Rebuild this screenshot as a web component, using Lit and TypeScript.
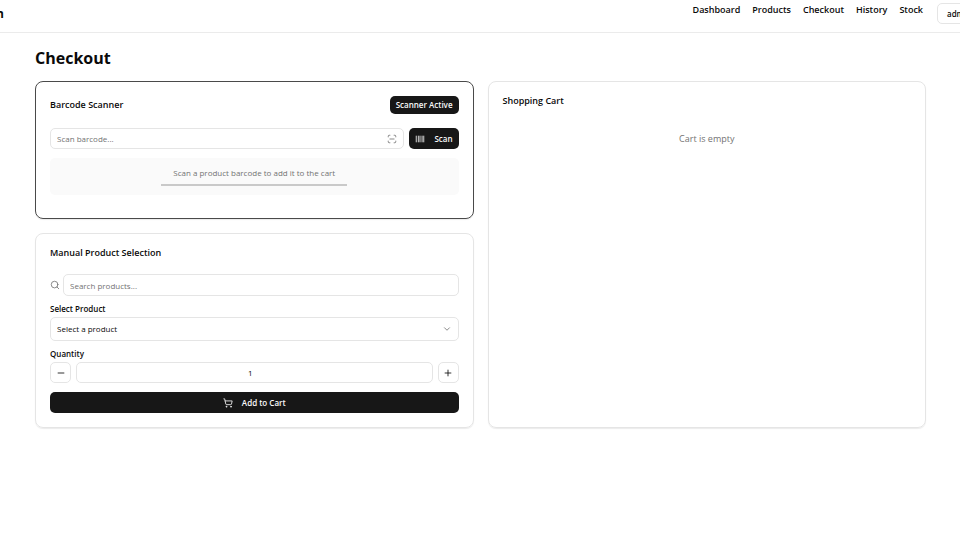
import { LitElement, html, css, svg } from "lit";
import { customElement, state } from "lit/decorators.js";

const icon = (body: unknown, cls = "icon") => html`
  <svg class=${cls} viewBox="0 0 24 24" fill="none" stroke="currentColor" stroke-width="2"
    stroke-linecap="round" stroke-linejoin="round" aria-hidden="true">${body}</svg>`;

const scanIcon = svg`<path d="M3 7V5a2 2 0 0 1 2-2h2M17 3h2a2 2 0 0 1 2 2v2M21 17v2a2 2 0 0 1-2 2h-2M7 21H5a2 2 0 0 1-2-2v-2M7 12h10"/>`;
const barcodeIcon = svg`<path d="M3 5v14M8 5v14M12 5v14M17 5v14M21 5v14"/>`;
const searchIcon = svg`<circle cx="11" cy="11" r="8"/><path d="m21 21-4.3-4.3"/>`;
const chevronIcon = svg`<path d="m6 9 6 6 6-6"/>`;
const minusIcon = svg`<path d="M5 12h14"/>`;
const plusIcon = svg`<path d="M5 12h14M12 5v14"/>`;
const cartIcon = svg`<circle cx="8" cy="21" r="1"/><circle cx="19" cy="21" r="1"/><path d="M2 2h2l2.7 12.4a2 2 0 0 0 2 1.600h9.700a2 2 0 0 0 2-1.600L22 7H5.100"/>`;

@customElement("app-root")
export class AppRoot extends LitElement {
  @state() private quantity = 1;

  static styles = css`
    :host {
      display: block;
      min-height: 100vh;
      overflow: hidden;
      background: #fff;
      color: #0a0a0a;
      font: 400 8px/12px "Open Sans", "Noto Sans", sans-serif;
    }
    * { box-sizing: border-box; }
    button, input, select { font: inherit; color: inherit; margin: 0; outline: none; }
    h1, h2, p { margin: 0; }
    header {
      display: flex;
      align-items: flex-start;
      justify-content: space-between;
      height: 33px;
      padding-top: 3px;
      border-bottom: 1px solid #ebebeb;
    }
    .brand {
      margin-left: -4px;
      padding-top: 3px;
      font-size: 12px;
      line-height: 16px;
      font-weight: 700;
      white-space: nowrap;
    }
    nav { display: flex; gap: 12px; margin-right: -18px; }
    nav a {
      color: inherit;
      text-decoration: none;
      font-size: 9px;
      line-height: 14px;
      font-weight: 600;
    }
    .user {
      width: 41px;
      height: 21px;
      margin-left: 2px;
      padding: 0 9px;
      border: 1px solid #e5e5e5;
      border-radius: 5px;
      background: #fff;
      font-weight: 600;
    }
    main { padding: 13px 34px 0 35px; }
    h1 { font-size: 16px; line-height: 24px; font-weight: 700; margin-bottom: 11px; }
    .columns { display: grid; grid-template-columns: 1fr 1fr; gap: 14px; }
    .stack { display: grid; gap: 14px; }
    .card {
      padding: 13px 14px 14px;
      border: 1px solid #e5e5e5;
      border-radius: 8px;
      box-shadow: 0 1px 1px rgba(0, 0, 0, 0.08);
    }
    .scanner { border-color: #4a4a4a; padding: 14px 14px 23px; }
    h2 { font-size: 9px; line-height: 12px; font-weight: 600; }
    .title-row {
      display: flex;
      align-items: center;
      justify-content: space-between;
      margin-bottom: 14px;
    }
    .row { display: flex; align-items: center; gap: 5px; }
    .primary {
      display: flex;
      align-items: center;
      justify-content: center;
      height: 21px;
      padding: 0 6px;
      border: 0;
      border-radius: 5px;
      background: #171717;
      color: #fafafa;
      font-weight: 600;
      gap: 9px;
      white-space: nowrap;
    }
    .status { height: 18px; }
    .full { width: 100%; margin-top: 9px; }
    .field { position: relative; flex: 1; min-width: 0; display: flex; }
    .box {
      flex: 1;
      width: 100%;
      min-width: 0;
      height: 21px;
      padding: 0 6px;
      border: 1px solid #e5e5e5;
      border-radius: 5px;
      background: #fff;
      appearance: none;
    }
    .box::placeholder { color: #737373; opacity: 1; }
    .select { height: 24px; }
    .count { padding: 0 14px 0 6px; text-align: center; appearance: textfield; }
    .count::-webkit-inner-spin-button { display: none; }
    .icon { width: 10px; height: 10px; flex: none; display: block; }
    .muted { color: #737373; }
    .trailing { position: absolute; right: 7px; top: 0; bottom: 0; display: flex; align-items: center; color: #737373; pointer-events: none; }
    .hint {
      margin-top: 9px;
      height: 37px;
      padding-top: 9px;
      border-radius: 5px;
      background: #fafafa;
      color: #737373;
      text-align: center;
    }
    .bar { width: 186px; height: 2px; margin: 5px auto 0; background: #c9c9c9; }
    .search { margin-top: 15px; gap: 3px; }
    .search .box { height: 22px; }
    label { display: block; margin-top: 7px; padding-bottom: 2px; font-weight: 600; }
    .step {
      display: flex;
      align-items: center;
      justify-content: center;
      width: 21px;
      height: 21px;
      padding: 0;
      border: 1px solid #e5e5e5;
      border-radius: 5px;
      background: #fff;
    }
    .empty { margin-top: 26px; font-size: 9px; text-align: center; color: #737373; }
  `;

  private step(by: number) {
    this.quantity = Math.max(1, this.quantity + by);
  }

  render() {
    return html`
      <header>
        <div class="brand">n</div>
        <nav>
          ${["Dashboard", "Products", "Checkout", "History", "Stock"].map(
            (name) => html`<a href="#${name.toLowerCase()}">${name}</a>`
          )}
          <button class="user">admin</button>
        </nav>
      </header>
      <main>
        <h1>Checkout</h1>
        <div class="columns">
          <div class="stack">
            <section class="card scanner">
              <div class="title-row">
                <h2>Barcode Scanner</h2>
                <button class="primary status">Scanner Active</button>
              </div>
              <div class="row">
                <div class="field">
                  <input class="box" aria-label="Scan barcode" placeholder="Scan barcode..." />
                  <span class="trailing">${icon(scanIcon)}</span>
                </div>
                <button class="primary">${icon(barcodeIcon)}Scan</button>
              </div>
              <div class="hint">
                <p>Scan a product barcode to add it to the cart</p>
                <div class="bar"></div>
              </div>
            </section>
            <section class="card">
              <h2>Manual Product Selection</h2>
              <div class="row search">
                ${icon(searchIcon, "icon muted")}
                <input class="box" aria-label="Search products" placeholder="Search products..." />
              </div>
              <label for="product">Select Product</label>
              <div class="field">
                <select id="product" class="box select"><option>Select a product</option></select>
                <span class="trailing">${icon(chevronIcon)}</span>
              </div>
              <label for="quantity">Quantity</label>
              <div class="row">
                <button class="step" aria-label="Decrease" @click=${() => this.step(-1)}>${icon(minusIcon)}</button>
                <input id="quantity" class="box count" type="number" min="1" .value=${String(this.quantity)} />
                <button class="step" aria-label="Increase" @click=${() => this.step(1)}>${icon(plusIcon)}</button>
              </div>
              <button class="primary full">${icon(cartIcon)}Add to Cart</button>
            </section>
          </div>
          <section class="card">
            <h2>Shopping Cart</h2>
            <p class="empty">Cart is empty</p>
          </section>
        </div>
      </main>
    `;
  }
}
